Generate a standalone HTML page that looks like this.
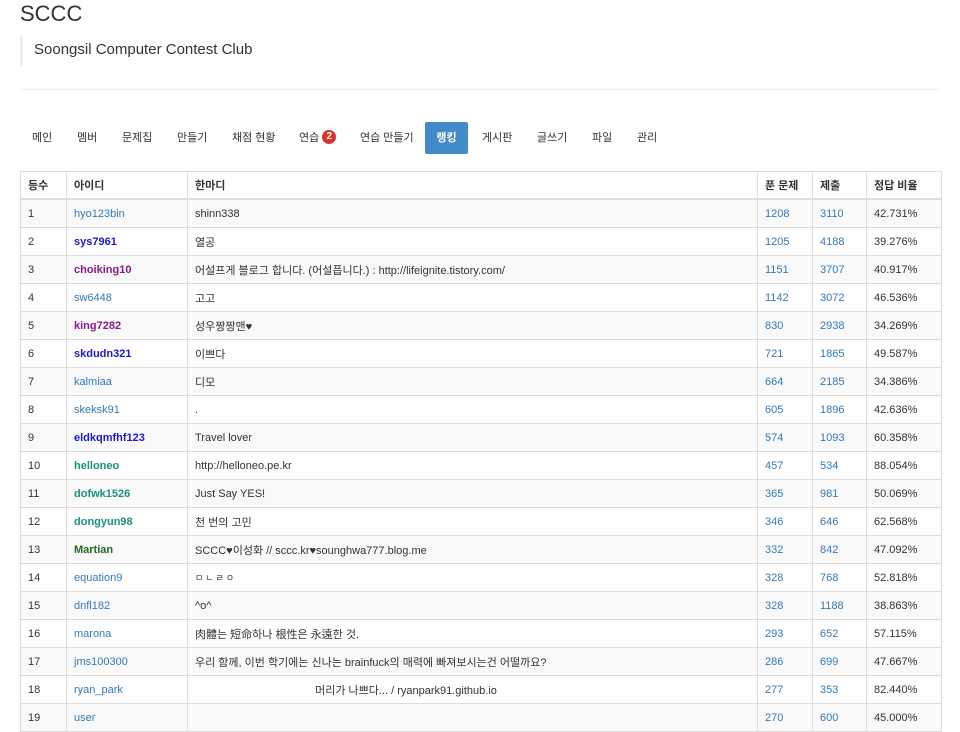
<!DOCTYPE html>
<html><head><meta charset="utf-8"><style>
body{margin:0;background:#fff;font-family:"Liberation Sans","Noto Sans CJK KR",sans-serif;color:#333;width:960px;height:720px;overflow:hidden;position:relative}
.t{position:absolute;left:20px;top:0;font-size:22px;line-height:28px;color:#333}
.bq{position:absolute;left:20px;top:35px;height:31px;border-left:3px solid #eee;padding-left:11px;font-size:15px;line-height:30px}
.hr{position:absolute;left:20px;width:920px;top:89px;border-top:1px solid #eee}
.nav{position:absolute;top:122px;left:20px;height:32px;font-size:11px}
.nav>span{position:absolute;top:0;height:32px;line-height:32px;white-space:nowrap}
.nav .a{background:#428bca;color:#fff;font-weight:bold;text-align:center;border-radius:2px}
.badge{display:inline-block;width:14px;height:14px;border-radius:7px;background:#d9342b;color:#fff;font-size:10px;line-height:14px;text-align:center;vertical-align:2px;margin-left:3px;font-weight:bold}
table{position:absolute;left:20px;top:171px;width:921px;border-collapse:collapse;font-size:11px;table-layout:fixed}
td,th{border:1px solid #ddd;height:27px;padding:0 0 0 7px;text-align:left;white-space:nowrap;overflow:hidden}
th{font-weight:bold;border-bottom:2px solid #ddd;height:26px}
tr:nth-child(even) td{background:#f9f9f9}
a{color:#337ab7;text-decoration:none}
.b{color:#1a1acc;font-weight:bold}.p{color:#8b1a8b;font-weight:bold}.g{color:#1a9080;font-weight:bold}.m{color:#1f6b1f;font-weight:bold}
</style></head><body>
<div class="t">SCCC</div>
<div class="bq">Soongsil Computer Contest Club</div>
<div class="hr"></div>
<div class="nav">
<span style="left:12px">메인</span><span style="left:57px">멤버</span><span style="left:102px">문제집</span><span style="left:157px">만들기</span><span style="left:212px">채점 현황</span><span style="left:279px">연습<b class="badge">2</b></span><span style="left:340px">연습 만들기</span><span class="a" style="left:405px;width:43px">랭킹</span><span style="left:462px">게시판</span><span style="left:517px">글쓰기</span><span style="left:572px">파일</span><span style="left:617px">관리</span>
</div>
<table>
<colgroup><col style="width:46px"><col style="width:121px"><col style="width:570px"><col style="width:55px"><col style="width:54px"><col style="width:75px"></colgroup>
<tr><th>등수</th><th>아이디</th><th>한마디</th><th>푼 문제</th><th>제출</th><th>정답 비율</th></tr>
<tr><td>1</td><td><a>hyo123bin</a></td><td>shinn338</td><td><a>1208</a></td><td><a>3110</a></td><td>42.731%</td></tr>
<tr><td>2</td><td><a class="b">sys7961</a></td><td>열공</td><td><a>1205</a></td><td><a>4188</a></td><td>39.276%</td></tr>
<tr><td>3</td><td><a class="p">choiking10</a></td><td>어설프게 블로그 합니다. (어설픕니다.) : http://lifeignite.tistory.com/</td><td><a>1151</a></td><td><a>3707</a></td><td>40.917%</td></tr>
<tr><td>4</td><td><a>sw6448</a></td><td>고고</td><td><a>1142</a></td><td><a>3072</a></td><td>46.536%</td></tr>
<tr><td>5</td><td><a class="p">king7282</a></td><td>성우짱짱맨♥</td><td><a>830</a></td><td><a>2938</a></td><td>34.269%</td></tr>
<tr><td>6</td><td><a class="b">skdudn321</a></td><td>이쁘다</td><td><a>721</a></td><td><a>1865</a></td><td>49.587%</td></tr>
<tr><td>7</td><td><a>kalmiaa</a></td><td>디모</td><td><a>664</a></td><td><a>2185</a></td><td>34.386%</td></tr>
<tr><td>8</td><td><a>skeksk91</a></td><td>.</td><td><a>605</a></td><td><a>1896</a></td><td>42.636%</td></tr>
<tr><td>9</td><td><a class="b">eldkqmfhf123</a></td><td>Travel lover</td><td><a>574</a></td><td><a>1093</a></td><td>60.358%</td></tr>
<tr><td>10</td><td><a class="g">helloneo</a></td><td>http://helloneo.pe.kr</td><td><a>457</a></td><td><a>534</a></td><td>88.054%</td></tr>
<tr><td>11</td><td><a class="g">dofwk1526</a></td><td>Just Say YES!</td><td><a>365</a></td><td><a>981</a></td><td>50.069%</td></tr>
<tr><td>12</td><td><a class="g">dongyun98</a></td><td>천 번의 고민</td><td><a>346</a></td><td><a>646</a></td><td>62.568%</td></tr>
<tr><td>13</td><td><a class="m">Martian</a></td><td>SCCC♥이성화 // sccc.kr♥sounghwa777.blog.me</td><td><a>332</a></td><td><a>842</a></td><td>47.092%</td></tr>
<tr><td>14</td><td><a>equation9</a></td><td style="font-size:9px;letter-spacing:2px">ㅁㄴㄹㅇ</td><td><a>328</a></td><td><a>768</a></td><td>52.818%</td></tr>
<tr><td>15</td><td><a>dnfl182</a></td><td>^o^</td><td><a>328</a></td><td><a>1188</a></td><td>38.863%</td></tr>
<tr><td>16</td><td><a>marona</a></td><td>肉體는 短命하나 根性은 永遠한 것.</td><td><a>293</a></td><td><a>652</a></td><td>57.115%</td></tr>
<tr><td>17</td><td><a>jms100300</a></td><td>우리 함께, 이번 학기에는 신나는 brainfuck의 매력에 빠져보시는건 어떨까요?</td><td><a>286</a></td><td><a>699</a></td><td>47.667%</td></tr>
<tr><td>18</td><td><a>ryan_park</a></td><td style="text-align:center;padding-right:140px">머리가 나쁘다... / ryanpark91.github.io</td><td><a>277</a></td><td><a>353</a></td><td>82.440%</td></tr>
<tr><td>19</td><td><a>user</a></td><td>&nbsp;</td><td><a>270</a></td><td><a>600</a></td><td>45.000%</td></tr>
</table>
</body></html>
